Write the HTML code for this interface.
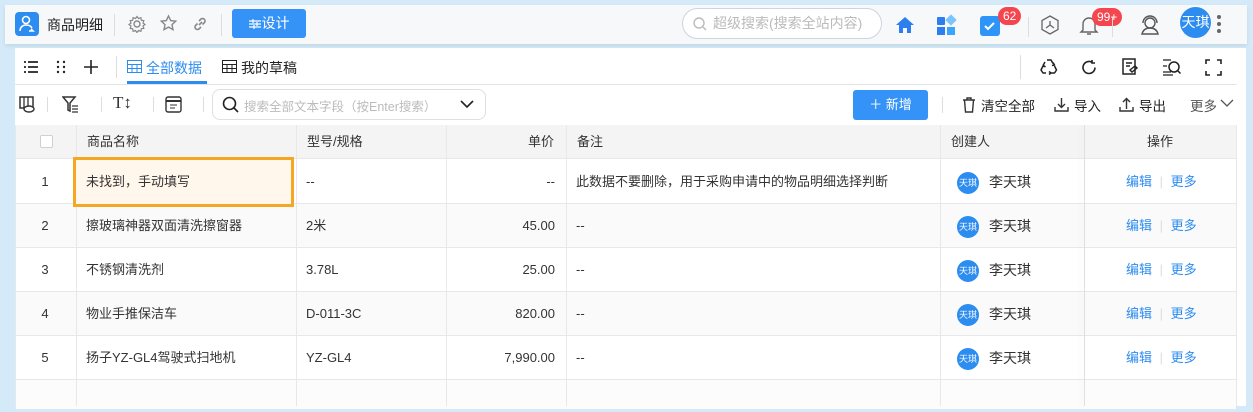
<!DOCTYPE html>
<html><head><meta charset="utf-8"><style>
*{box-sizing:border-box;margin:0;padding:0}
body{width:1253px;height:412px;overflow:hidden;background:#d4eaf8;font-family:"Liberation Sans","Noto Sans CJK SC",sans-serif;font-size:13px;color:#333;position:relative}
.a{position:absolute}
.top{left:5px;top:5px;width:1242px;height:39px;background:#f7f8fa;box-shadow:0 2px 4px rgba(0,0,0,.08)}
.panel{left:15px;top:48px;width:1231px;height:358px;background:#fff}
.vl{position:absolute;width:1px;background:#ddd}
.badge{position:absolute;background:#f5454f;color:#fff;font-size:12px;border-radius:9px;height:18px;line-height:18px;padding:0 5px}
.cell{position:absolute;height:44px;line-height:46px;white-space:nowrap}
.hd{position:absolute;height:33px;line-height:34px;color:#333}
.av{display:inline-block;width:22px;height:22px;border-radius:50%;background:#2d8cf0;color:#fff;font-size:9px;line-height:22px;text-align:center;vertical-align:middle;margin-right:10px}
.lk{color:#2d8cf0}
</style></head><body>
<div class="a top">
  <div class="a" style="left:10px;top:7px;width:24px;height:24px;background:#2d8cf0;border-radius:4px">
   <svg width="24" height="24"><circle cx="11" cy="8" r="3.5" stroke="#fff" fill="none" stroke-width="1.6"/><path d="M5 19c0-4 3-6 6-6s5 1 6 3M14 19h4l-2-2" stroke="#fff" fill="none" stroke-width="1.6"/></svg>
  </div>
  <div class="a" style="left:42px;top:10px;font-size:14px;color:#222">商品明细</div>
  <div class="vl" style="left:109px;top:9px;height:22px"></div>
  <svg class="a" style="left:123px;top:10px" width="18" height="18"><circle cx="9" cy="9" r="3" stroke="#888" fill="none" stroke-width="1.4"/><path d="M9 1.5l1.5 2 2.4-.8.4 2.5 2.5.4-.8 2.4 2 1.5-2 1.5.8 2.4-2.5.4-.4 2.5-2.4-.8-1.5 2-1.5-2-2.4.8-.4-2.5-2.5-.4.8-2.4-2-1.5 2-1.5-.8-2.4 2.5-.4.4-2.5 2.4.8z" stroke="#888" fill="none" stroke-width="1.2"/></svg>
  <svg class="a" style="left:154px;top:9px" width="19" height="19"><path d="M9.5 2l2.2 4.6 5 .6-3.7 3.4 1 5-4.5-2.5-4.5 2.5 1-5L2.3 7.2l5-.6z" stroke="#888" fill="none" stroke-width="1.4"/></svg>
  <svg class="a" style="left:186px;top:10px" width="18" height="18"><path d="M8 10l3-3M6.5 8.5l-2 2a2.5 2.5 0 003.5 3.5l2-2M11.5 9.5l2-2A2.5 2.5 0 0010 4l-2 2" stroke="#888" fill="none" stroke-width="1.6"/></svg>
  <div class="vl" style="left:216px;top:9px;height:22px"></div>
  <div class="a" style="left:227px;top:4px;width:74px;height:29px;background:#3592f6;border-radius:3px;color:#fff;font-size:14px;line-height:29px;text-align:center"><svg width="12" height="10" style="vertical-align:-1px;margin-right:1px"><path d="M0 2h12M0 5h12M0 8h12M4 0v4M8 3v4M5 6v4" stroke="#fff" stroke-width="1.2"/></svg>设计</div>
  <div class="a" style="left:677px;top:3px;width:200px;height:31px;border:1px solid #cdd3df;border-radius:16px;background:#fff;color:#bbb;font-size:14px;line-height:29px;padding-left:30px">超级搜索(搜索全站内容)</div>
  <svg class="a" style="left:687px;top:11px" width="16" height="16"><circle cx="7" cy="7" r="5" stroke="#bbb" fill="none" stroke-width="1.4"/><path d="M11 11l3 3" stroke="#bbb" stroke-width="1.4"/></svg>
  <svg class="a" style="left:889px;top:9px" width="22" height="22"><path d="M11 3L2 11h3v8h4v-5h4v5h4v-8h3z" fill="#2d7ff0"/></svg>
  <div class="a" style="left:932px;top:12px;width:8px;height:8px;background:#2d7ff0;border-radius:1px"></div>
  <div class="a" style="left:942px;top:11px;width:8px;height:8px;background:#7cc3ff;transform:rotate(45deg)"></div>
  <div class="a" style="left:932px;top:22px;width:8px;height:8px;background:#2d7ff0"></div>
  <div class="a" style="left:942px;top:22px;width:8px;height:8px;background:#38a6ff"></div>
  <div class="a" style="left:975px;top:11px;width:20px;height:20px;background:#2d95f8;border-radius:3px"><svg width="20" height="20"><path d="M5 10l3 3 6-6" stroke="#fff" fill="none" stroke-width="2"/></svg></div>
  <div class="badge" style="left:993px;top:2px">62</div>
  <div class="vl" style="left:1023px;top:12px;height:20px"></div>
  <svg class="a" style="left:1034px;top:9px" width="22" height="22"><path d="M11 2l8 4.5v9L11 20l-8-4.5v-9z" stroke="#666" fill="none" stroke-width="1.3"/><path d="M11 11V7M11 11l-4 3M11 11l4 3" stroke="#666" stroke-width="1.3"/></svg>
  <svg class="a" style="left:1073px;top:9px" width="22" height="24"><path d="M5 16V10a6 6 0 0112 0v6l2 2H3z M9 20h4" stroke="#666" fill="none" stroke-width="1.4"/></svg>
  <div class="badge" style="left:1087px;top:3px">99+</div>
  <div class="vl" style="left:1107px;top:12px;height:20px"></div>
  <svg class="a" style="left:1134px;top:8px" width="22" height="24"><circle cx="11" cy="10" r="5" stroke="#555" fill="none" stroke-width="1.4"/><path d="M4 10a7 7 0 0114 0M3 21c1-4 4-6 8-6s7 2 8 6z" stroke="#555" fill="none" stroke-width="1.4"/></svg>
  <div class="a" style="left:1175px;top:2px;width:31px;height:31px;border-radius:50%;background:#2d8cf0;color:#fff;font-size:14px;line-height:31px;text-align:center">天琪</div>
  <div class="a" style="left:1212px;top:10px;width:4px;height:4px;border-radius:50%;background:#666;box-shadow:0 7px 0 #666,0 14px 0 #666"></div>
</div>

<div class="a panel"></div>
<svg class="a" style="left:23px;top:60px" width="16" height="14"><path d="M1 2h2M5 2h10M1 7h2M5 7h10M1 12h2M5 12h10" stroke="#222" stroke-width="1.8"/></svg>
<svg class="a" style="left:56px;top:60px" width="10" height="14"><g fill="#222"><circle cx="2" cy="2" r="1.2"/><circle cx="8" cy="2" r="1.2"/><circle cx="2" cy="7" r="1.2"/><circle cx="8" cy="7" r="1.2"/><circle cx="2" cy="12" r="1.2"/><circle cx="8" cy="12" r="1.2"/></g></svg>
<svg class="a" style="left:83px;top:59px" width="16" height="16"><path d="M8 1v14M1 8h14" stroke="#222" stroke-width="1.6"/></svg>
<div class="vl" style="left:116px;top:56px;height:22px"></div>
<svg class="a" style="left:127px;top:60px" width="15" height="13"><rect x=".5" y=".5" width="14" height="12" stroke="#2d8cf0" fill="none"/><path d="M.5 4.5h14M.5 8.5h14M5 4.5v8M10 4.5v8" stroke="#2d8cf0"/></svg>
<div class="a" style="left:146px;top:58px;color:#2d8cf0;font-size:14px">全部数据</div>
<div class="a" style="left:127px;top:81px;width:80px;height:3px;background:#2d8cf0"></div>
<svg class="a" style="left:222px;top:60px" width="15" height="13"><rect x=".5" y=".5" width="14" height="12" stroke="#222" fill="none"/><path d="M.5 4.5h14M.5 8.5h14M5 4.5v8M10 4.5v8" stroke="#222"/></svg>
<div class="a" style="left:241px;top:58px;color:#222;font-size:14px">我的草稿</div>
<div class="vl" style="left:1020px;top:55px;height:24px"></div>
<svg class="a" style="left:1040px;top:58px" width="18" height="17"><path d="M7 2h4l2 3.5M14.5 8l2 4-2 3H11M6 15H3l-2-3 2-4M5 4L3 7.5M13 4.5l1.5 2.5-2.5.5M9 13.5l2 1.5-2 1.5M2 10l1.5-2.5 2 1.5" stroke="#222" fill="none" stroke-width="1.5" stroke-linejoin="round"/></svg>
<svg class="a" style="left:1081px;top:59px" width="17" height="17"><path d="M14 8.5A6 6 0 1111 3.3M11 1v3h3" stroke="#222" fill="none" stroke-width="1.6"/></svg>
<svg class="a" style="left:1122px;top:58px" width="17" height="18"><rect x="1" y="1" width="12" height="15" stroke="#222" fill="none" stroke-width="1.5"/><path d="M4 5h6M4 8h4M8 12l5-4 2 2-5 4z" stroke="#222" fill="none" stroke-width="1.4"/></svg>
<svg class="a" style="left:1162px;top:58px" width="20" height="18"><path d="M1 2h8M1 8h4M1 14h8M1 17h10" stroke="#222" stroke-width="1.3"/><circle cx="12" cy="9" r="5" stroke="#222" fill="none" stroke-width="1.5"/><path d="M15.5 12.5l3 3" stroke="#222" stroke-width="1.5"/></svg>
<svg class="a" style="left:1205px;top:59px" width="17" height="17"><path d="M1 5V1h4M12 1h4v4M16 12v4h-4M5 16H1v-4" stroke="#222" fill="none" stroke-width="1.6"/></svg>
<div class="a" style="left:15px;top:84px;width:1222px;height:1px;background:#e5e5e5"></div>
<svg class="a" style="left:19px;top:96px" width="17" height="17"><rect x="1" y="1" width="13" height="11" stroke="#333" fill="none" stroke-width="1.5"/><path d="M5 1v11M9 1v11" stroke="#333" stroke-width="1.3"/><ellipse cx="10" cy="13" rx="5" ry="3" fill="#fff" stroke="#333" stroke-width="1.4"/></svg>
<div class="vl" style="left:47px;top:97px;height:15px"></div>
<svg class="a" style="left:62px;top:96px" width="18" height="17"><path d="M1 1h12l-5 6v8l-2-1V7z" stroke="#333" fill="none" stroke-width="1.5"/><path d="M10 10h6M10 13h6M10 16h6" stroke="#333" stroke-width="1.2"/></svg>
<div class="vl" style="left:101px;top:97px;height:15px"></div>
<div class="a" style="left:113px;top:93px;font-size:17px;font-family:'Liberation Serif',serif;color:#333">T↕</div>
<div class="vl" style="left:153px;top:97px;height:15px"></div>
<svg class="a" style="left:165px;top:96px" width="17" height="17"><rect x="1" y="1" width="15" height="15" rx="2" stroke="#333" fill="none" stroke-width="1.4"/><path d="M1 5h15" stroke="#333" stroke-width="2"/><path d="M5 9h7M5 12h5" stroke="#333"/></svg>
<div class="vl" style="left:203px;top:97px;height:15px"></div>
<div class="a" style="left:212px;top:89px;width:274px;height:31px;border:1px solid #dcdfe6;border-radius:8px;background:#fff"></div>
<svg class="a" style="left:222px;top:96px" width="18" height="18"><circle cx="7.5" cy="7.5" r="6" stroke="#222" fill="none" stroke-width="1.6"/><path d="M12 12l4 4" stroke="#222" stroke-width="1.6"/></svg>
<div class="a" style="left:244px;top:96px;color:#bbb;font-size:12.5px">搜索全部文本字段（按Enter搜索）</div>
<svg class="a" style="left:459px;top:99px" width="16" height="10"><path d="M2 2l6 6 6-6" stroke="#222" fill="none" stroke-width="1.6"/></svg>
<div class="a" style="left:853px;top:90px;width:75px;height:30px;background:#3592f6;border-radius:3px;color:#fff;line-height:30px;text-align:center;font-size:13px">＋ 新增</div>
<div class="vl" style="left:942px;top:97px;height:16px"></div>
<svg class="a" style="left:962px;top:97px" width="14" height="16"><path d="M1 3h12M5 3V1h4v2M2.5 3l1 12h7l1-12" stroke="#333" fill="none" stroke-width="1.4"/></svg>
<div class="a" style="left:981px;top:95px;font-size:13.5px;color:#222">清空全部</div>
<svg class="a" style="left:1054px;top:97px" width="15" height="15"><path d="M7.5 1v9M4 7l3.5 3.5L11 7M1 10v4h13v-4" stroke="#333" fill="none" stroke-width="1.4"/></svg>
<div class="a" style="left:1074px;top:95px;font-size:13.5px;color:#222">导入</div>
<svg class="a" style="left:1119px;top:97px" width="15" height="15"><path d="M7.5 12V2M4 5l3.5-3.5L11 5M1 10v4h13v-4" stroke="#333" fill="none" stroke-width="1.4"/></svg>
<div class="a" style="left:1139px;top:95px;font-size:13.5px;color:#222">导出</div>
<div class="a" style="left:1190px;top:95px;font-size:13.5px;color:#555">更多</div>
<svg class="a" style="left:1220px;top:98px" width="14" height="10"><path d="M1 2l6 6 6-6" stroke="#555" fill="none" stroke-width="1.3"/></svg>

<div class="a" style="left:15px;top:125px;width:1222px;height:281px;border-left:1px solid #e8e8e8;border-right:1px solid #e8e8e8">
 <div class="a" style="left:0;top:0;width:1220px;height:34px;background:#f4f4f4;border-bottom:1px solid #e8e8e8"></div>
 <div class="a" style="left:0;top:78px;width:1220px;height:44px;background:#fafafa"></div>
 <div class="a" style="left:0;top:166px;width:1220px;height:44px;background:#fafafa"></div>
 <div class="a" style="left:0;top:254px;width:1220px;height:30px;background:#fcfcfc"></div>
 <div class="a" style="left:0;top:78px;width:1220px;height:1px;background:#e8e8e8"></div>
 <div class="a" style="left:0;top:122px;width:1220px;height:1px;background:#e8e8e8"></div>
 <div class="a" style="left:0;top:166px;width:1220px;height:1px;background:#e8e8e8"></div>
 <div class="a" style="left:0;top:210px;width:1220px;height:1px;background:#e8e8e8"></div>
 <div class="a" style="left:0;top:254px;width:1220px;height:1px;background:#e8e8e8"></div>
 <div class="vl" style="left:60px;top:0;height:281px;background:#e8e8e8"></div>
 <div class="vl" style="left:280px;top:0;height:281px;background:#e8e8e8"></div>
 <div class="vl" style="left:430px;top:0;height:281px;background:#e8e8e8"></div>
 <div class="vl" style="left:550px;top:0;height:281px;background:#e8e8e8"></div>
 <div class="vl" style="left:924px;top:0;height:281px;background:#e8e8e8"></div>
 <div class="a" style="left:1068px;top:0;width:1px;height:281px;background:#e0e0e0;box-shadow:-3px 0 6px rgba(0,0,0,.08)"></div>
 <div class="a" style="left:24px;top:10px;width:13px;height:13px;border:1px solid #d0d0d0;border-radius:2px;background:#fff"></div>
 <div class="hd" style="left:71px">商品名称</div>
 <div class="hd" style="left:291px">型号/规格</div>
 <div class="hd" style="left:430px;width:108px;text-align:right">单价</div>
 <div class="hd" style="left:561px">备注</div>
 <div class="hd" style="left:935px">创建人</div>
 <div class="hd" style="left:1068px;width:152px;text-align:center">操作</div>
</div>
<div class="a" style="left:73px;top:157px;width:221px;height:50px;background:#fff6ec;border:3px solid #f5a623"></div>
<div class="a" style="left:15px;top:159px">
 <div class="cell" style="top:0;left:0;width:60px;text-align:center">1</div>
 <div class="cell" style="top:0;left:71px">未找到，手动填写</div>
 <div class="cell" style="top:0;left:291px">--</div>
 <div class="cell" style="top:0;left:430px;width:110px;text-align:right">--</div>
 <div class="cell" style="top:0;left:561px">此数据不要删除，用于采购申请中的物品明细选择判断</div>
 <div class="cell" style="top:44px;left:0;width:60px;text-align:center">2</div>
 <div class="cell" style="top:44px;left:71px">擦玻璃神器双面清洗擦窗器</div>
 <div class="cell" style="top:44px;left:291px">2米</div>
 <div class="cell" style="top:44px;left:430px;width:110px;text-align:right">45.00</div>
 <div class="cell" style="top:44px;left:561px">--</div>
 <div class="cell" style="top:88px;left:0;width:60px;text-align:center">3</div>
 <div class="cell" style="top:88px;left:71px">不锈钢清洗剂</div>
 <div class="cell" style="top:88px;left:291px">3.78L</div>
 <div class="cell" style="top:88px;left:430px;width:110px;text-align:right">25.00</div>
 <div class="cell" style="top:88px;left:561px">--</div>
 <div class="cell" style="top:132px;left:0;width:60px;text-align:center">4</div>
 <div class="cell" style="top:132px;left:71px">物业手推保洁车</div>
 <div class="cell" style="top:132px;left:291px">D-011-3C</div>
 <div class="cell" style="top:132px;left:430px;width:110px;text-align:right">820.00</div>
 <div class="cell" style="top:132px;left:561px">--</div>
 <div class="cell" style="top:176px;left:0;width:60px;text-align:center">5</div>
 <div class="cell" style="top:176px;left:71px">扬子YZ-GL4驾驶式扫地机</div>
 <div class="cell" style="top:176px;left:291px">YZ-GL4</div>
 <div class="cell" style="top:176px;left:430px;width:110px;text-align:right">7,990.00</div>
 <div class="cell" style="top:176px;left:561px">--</div>
 <div class="cell" style="top:0;left:942px;font-size:14px"><span class="av">天琪</span>李天琪</div>
 <div class="cell" style="top:44px;left:942px;font-size:14px"><span class="av">天琪</span>李天琪</div>
 <div class="cell" style="top:88px;left:942px;font-size:14px"><span class="av">天琪</span>李天琪</div>
 <div class="cell" style="top:132px;left:942px;font-size:14px"><span class="av">天琪</span>李天琪</div>
 <div class="cell" style="top:176px;left:942px;font-size:14px"><span class="av">天琪</span>李天琪</div>
 <div class="cell lk" style="top:0;left:1111px">编辑 <span style="color:#ddd;margin:0 4px">|</span> 更多</div>
 <div class="cell lk" style="top:44px;left:1111px">编辑 <span style="color:#ddd;margin:0 4px">|</span> 更多</div>
 <div class="cell lk" style="top:88px;left:1111px">编辑 <span style="color:#ddd;margin:0 4px">|</span> 更多</div>
 <div class="cell lk" style="top:132px;left:1111px">编辑 <span style="color:#ddd;margin:0 4px">|</span> 更多</div>
 <div class="cell lk" style="top:176px;left:1111px">编辑 <span style="color:#ddd;margin:0 4px">|</span> 更多</div>
</div>
</body></html>
